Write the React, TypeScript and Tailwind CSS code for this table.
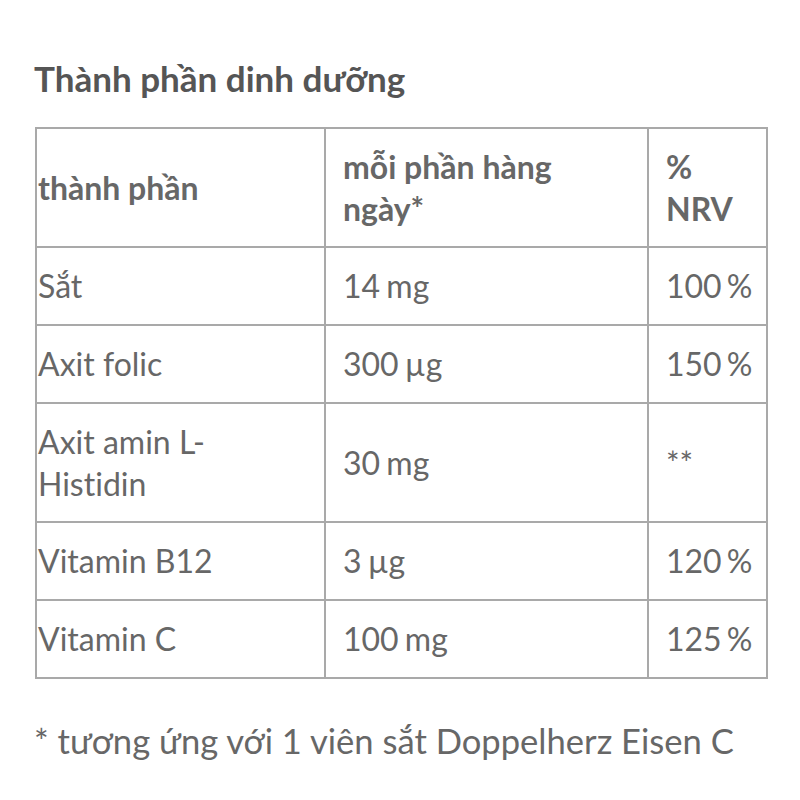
import React from "react";

const rows: [string, string, string][] = [
  ["Sắt", "14 mg", "100 %"],
  ["Axit folic", "300 µg", "150 %"],
  ["Axit amin L-Histidin", "30 mg", "**"],
  ["Vitamin B12", "3 µg", "120 %"],
  ["Vitamin C", "100 mg", "125 %"],
];

export default function App() {
  return (
    <div className="w-[800px] h-[800px] bg-white pt-[56px] pl-[35px] pr-[34px] [font-variant-ligatures:none]" style={{ fontFamily: "Lato, 'Noto Sans', sans-serif" }}>
      <h2 className="-ml-[1px] text-[35px] font-bold text-[#555555] leading-[44px]">Thành phần dinh dưỡng</h2>
      <table className="mt-[27px] w-[731px] table-fixed border-collapse border-2 border-[#a9a9a9] text-[32px] leading-[42px] text-[#676767]">
        <thead>
          <tr className="h-[119px]">
            <th className="w-[289px] border-2 border-[#a9a9a9] pl-[1px] pr-[18px] text-left font-bold">thành phần</th>
            <th className="w-[323px] border-2 border-[#a9a9a9] px-[17px] text-left font-bold">mỗi phần hàng ngày*</th>
            <th className="w-[119px] border-2 border-[#a9a9a9] px-[17px] text-left font-bold">
              <span className="block">%</span>
              <span className="block">NRV</span>
            </th>
          </tr>
        </thead>
        <tbody>
          {rows.map((r, i) => (
            <tr key={i} className={i === 2 ? "h-[119px]" : "h-[78px]"}>
              <td className="border-2 border-[#a9a9a9] pl-[1px] pr-[18px]">{r[0]}</td>
              <td className="border-2 border-[#a9a9a9] px-[17px] [word-spacing:-2px]">{r[1]}</td>
              <td className="border-2 border-[#a9a9a9] pl-[17px] pr-[4px] whitespace-nowrap [word-spacing:-3px]">{r[2]}</td>
            </tr>
          ))}
        </tbody>
      </table>
      <p className="mt-[42px] -ml-[1px] text-[34.6px] leading-[40px] text-[#676767] whitespace-nowrap">* tương ứng với 1 viên sắt Doppelherz Eisen C</p>
    </div>
  );
}
